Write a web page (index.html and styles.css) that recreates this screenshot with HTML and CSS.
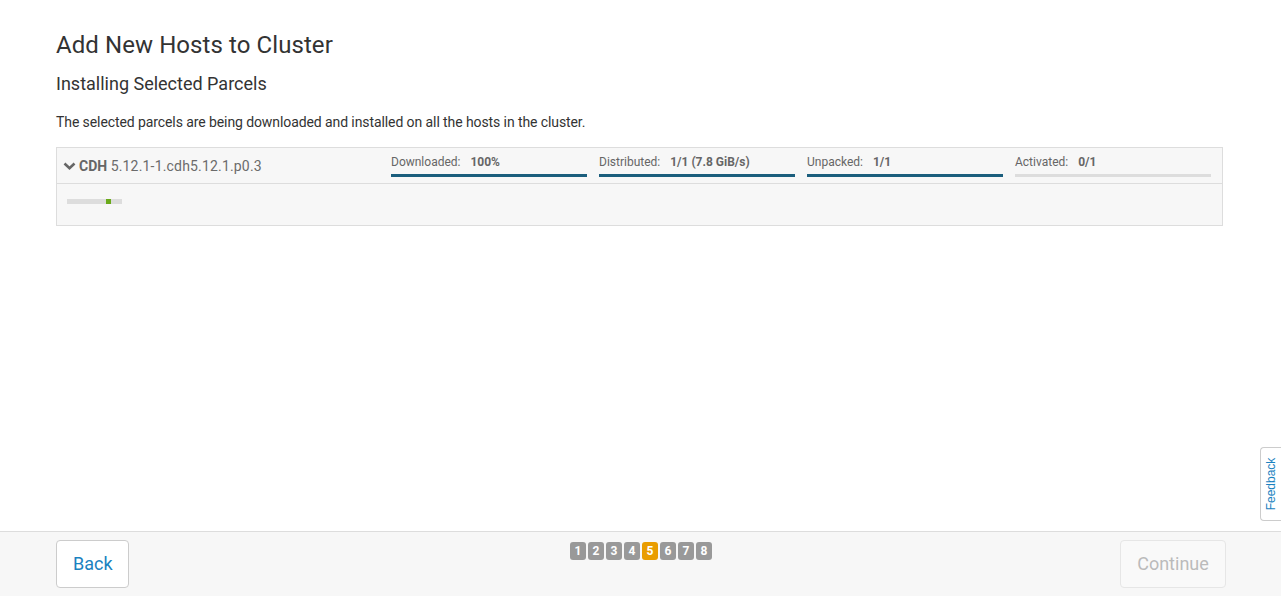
FILE: index.html
```html
<!DOCTYPE html>
<html>
<head>
<meta charset="utf-8">
<link rel="stylesheet" href="styles.css">
</head>
<body>
<main class="content">
  <h1 class="title">Add New Hosts to Cluster</h1>
  <h2 class="subtitle">Installing Selected Parcels</h2>
  <p class="desc">The selected parcels are being downloaded and installed on all the hosts in the cluster.</p>
  <div class="parcel">
    <div class="parcel-head">
      <div class="parcel-name">
        <svg class="chev" width="13" height="10" viewBox="0 0 13 10"><path d="M1.5 2.5 L6.5 7.2 L11.5 2.5" fill="none" stroke="#666" stroke-width="2.6"/></svg>
        <b>CDH</b>&nbsp;<span class="ver">5.12.1-1.cdh5.12.1.p0.3</span>
      </div>
      <div class="stages">
        <div class="stage"><div class="lbl">Downloaded:&nbsp; <b>100%</b></div><div class="bar"><div class="fill" style="width:100%"></div></div></div>
        <div class="stage"><div class="lbl">Distributed:&nbsp; <b>1/1 (7.8 GiB/s)</b></div><div class="bar"><div class="fill" style="width:100%"></div></div></div>
        <div class="stage"><div class="lbl">Unpacked:&nbsp; <b>1/1</b></div><div class="bar"><div class="fill" style="width:100%"></div></div></div>
        <div class="stage"><div class="lbl">Activated:&nbsp; <b>0/1</b></div><div class="bar"><div class="fill" style="width:0%"></div></div></div>
      </div>
    </div>
    <div class="parcel-body">
      <div class="mini"><div class="mini-dot"></div></div>
    </div>
  </div>
</main>
<footer class="footer">
  <button class="btn btn-back">Back</button>
  <div class="steps">
    <span class="step">1</span><span class="step">2</span><span class="step">3</span><span class="step">4</span><span class="step active">5</span><span class="step">6</span><span class="step">7</span><span class="step">8</span>
  </div>
  <button class="btn btn-continue" disabled>Continue</button>
</footer>
<div class="feedback"><span>Feedback</span></div>
</body>
</html>
```
FILE: styles.css
```css
html, body {
  margin: 0;
  padding: 0;
  height: 100%;
}
body {
  font-family: Roboto, "Liberation Sans", sans-serif;
  color: #333;
  background: #fff;
  display: flex;
  flex-direction: column;
  overflow: hidden;
}
.content {
  flex: 1;
  padding: 0 58px 0 56px;
}
.title {
  font-size: 24px;
  font-weight: 400;
  margin: 31px 0 0;
  line-height: 28px;
  color: #333;
  letter-spacing: 0.08px;
}
.subtitle {
  font-size: 18px;
  font-weight: 400;
  margin: 14px 0 0;
  line-height: 22px;
  color: #333;
}
.desc {
  font-size: 14px;
  margin: 17px 0 0;
  line-height: 20px;
  letter-spacing: -0.09px;
}
.parcel {
  margin-top: 15px;
  border: 1px solid #ddd;
  background: #f7f7f7;
}
.parcel-head {
  display: flex;
  height: 35px;
  border-bottom: 1px solid #ddd;
  padding-left: 6px;
}
.parcel-name {
  width: 328px;
  display: flex;
  align-items: center;
  font-size: 14px;
  color: #666;
  padding-top: 1px;
}
.parcel-name b { color: #666; font-weight: 700; }
.ver { letter-spacing: 0.18px; color: #6b6b6b; }
.chev { margin-right: 3px; }
.stages {
  display: flex;
  gap: 12px;
  flex: 1;
  padding-right: 11px;
}
.stage {
  width: 196px;
  padding-top: 7px;
}
.lbl {
  font-size: 12px;
  color: #666;
  line-height: 14px;
  white-space: nowrap;
}
.lbl b { color: #666; font-weight: 700; margin-left: 4px; }
.bar {
  height: 3px;
  background: #ddd;
  margin-top: 5px;
}
.fill {
  height: 3px;
  background: #1b5e7d;
}
.parcel-body {
  height: 41px;
  padding: 15px 10px 0;
  box-sizing: border-box;
}
.mini {
  width: 55px;
  height: 5px;
  background: #ddd;
  position: relative;
}
.mini-dot {
  position: absolute;
  left: 39px;
  top: 0;
  width: 5px;
  height: 5px;
  background: #6aaa1a;
}
.footer {
  height: 65px;
  border-top: 1px solid #ddd;
  background: #f7f7f7;
  display: flex;
  align-items: flex-start;
  padding: 8px 55px 0 56px;
  box-sizing: border-box;
  flex-shrink: 0;
}
.btn {
  font-family: Roboto, "Liberation Sans", sans-serif;
  font-size: 18px;
  height: 48px;
  border-radius: 4px;
  background: #fff;
  border: 1px solid #ccc;
  padding: 0 16px 2px;
}
.btn-back {
  color: #1a82c0;
  width: 73px;
}
.btn-continue {
  color: #bbb;
  border-color: #e6e6e6;
  background: #f9f9f9;
  width: 106px;
  margin-left: auto;
}
.steps {
  display: flex;
  gap: 2px;
  margin-left: 441px;
  margin-top: 2px;
}
.step {
  width: 16px;
  height: 18px;
  border-radius: 3px;
  background: #999;
  color: #fff;
  font-size: 12px;
  font-weight: 700;
  display: flex;
  align-items: center;
  justify-content: center;
}
.step.active { background: #e99d00; }
.feedback {
  position: absolute;
  left: 1260px;
  top: 447px;
  width: 22px;
  height: 74px;
  background: #fff;
  border: 1px solid #ccc;
  border-right: none;
  border-radius: 4px 0 0 4px;
  box-sizing: border-box;
  display: flex;
  align-items: center;
  justify-content: center;
}
.feedback span {
  transform: rotate(-90deg);
  font-family: "Liberation Sans", Arial, sans-serif;
  font-size: 12px;
  color: #1a82c0;
  white-space: nowrap;
}
```
